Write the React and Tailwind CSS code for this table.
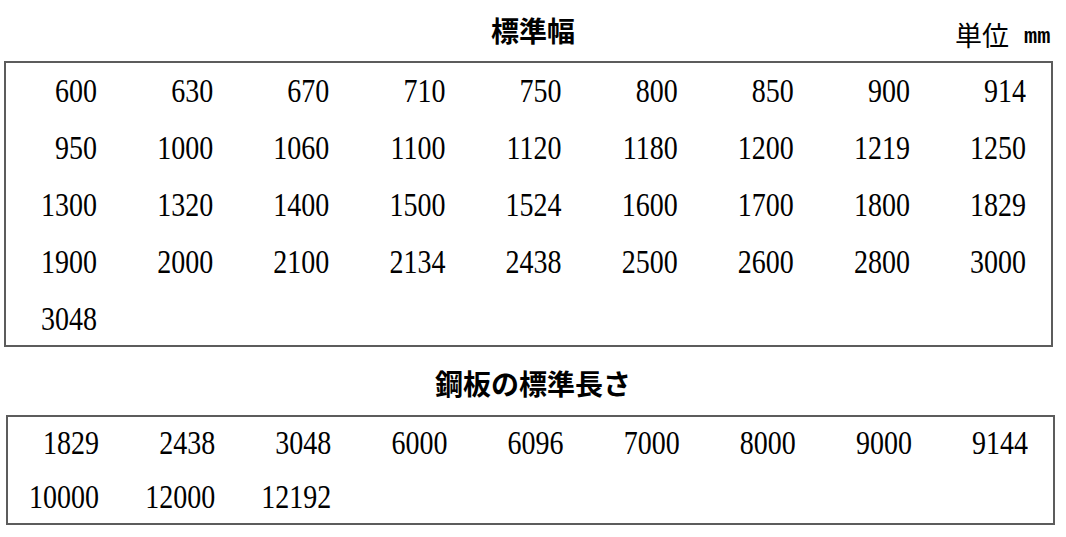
import React from "react";

const widths = [
  "600","630","670","710","750","800","850","900","914",
  "950","1000","1060","1100","1120","1180","1200","1219","1250",
  "1300","1320","1400","1500","1524","1600","1700","1800","1829",
  "1900","2000","2100","2134","2438","2500","2600","2800","3000",
  "3048",
];
const lengths = [
  "1829","2438","3048","6000","6096","7000","8000","9000","9144",
  "10000","12000","12192",
];

function Cell({ v, h }) {
  return (
    <div className={`flex items-center justify-end pr-[25px] pb-[2px] ${h}`}>
      <span className="inline-block text-[28px] leading-none text-black scale-y-[1.18] font-['Liberation_Serif','Noto_Sans_CJK_JP',serif]">
        {v}
      </span>
    </div>
  );
}

export default function App() {
  return (
    <div className="w-[1066px] h-[537px] bg-white overflow-hidden">
      <div className="relative h-[61px] flex justify-center">
        <div className="pt-[12px] text-[28px] leading-[36px] font-bold text-black font-['Noto_Sans_CJK_JP','Noto_Sans',sans-serif]">
          標準幅
        </div>
        <div className="absolute left-[955px] top-[17px] flex items-end gap-[15px] text-black">
          <span className="text-[27px] leading-[36px] font-normal font-['Noto_Sans_CJK_JP',sans-serif]">単位</span>
          <span className="text-[22px] leading-[30px] font-bold font-['Liberation_Mono',monospace]">mm</span>
        </div>
      </div>
      <div className="ml-[4px] w-[1049px] h-[286px] border-2 border-[#5c5c5c] grid grid-cols-9 auto-rows-[57px] content-start">
        {widths.map((v, i) => (
          <Cell key={i} v={v} h="h-[57px]" />
        ))}
      </div>
      <div className="h-[68px] flex justify-center pt-[18px]">
        <div className="text-[28px] leading-[36px] font-bold text-black font-['Noto_Sans_CJK_JP','Noto_Sans',sans-serif]">
          鋼板の標準長さ
        </div>
      </div>
      <div className="ml-[6px] w-[1049px] h-[110px] border-2 border-[#5c5c5c] grid grid-cols-9 auto-rows-[54px] content-start">
        {lengths.map((v, i) => (
          <Cell key={i} v={v} h="h-[54px]" />
        ))}
      </div>
    </div>
  );
}
